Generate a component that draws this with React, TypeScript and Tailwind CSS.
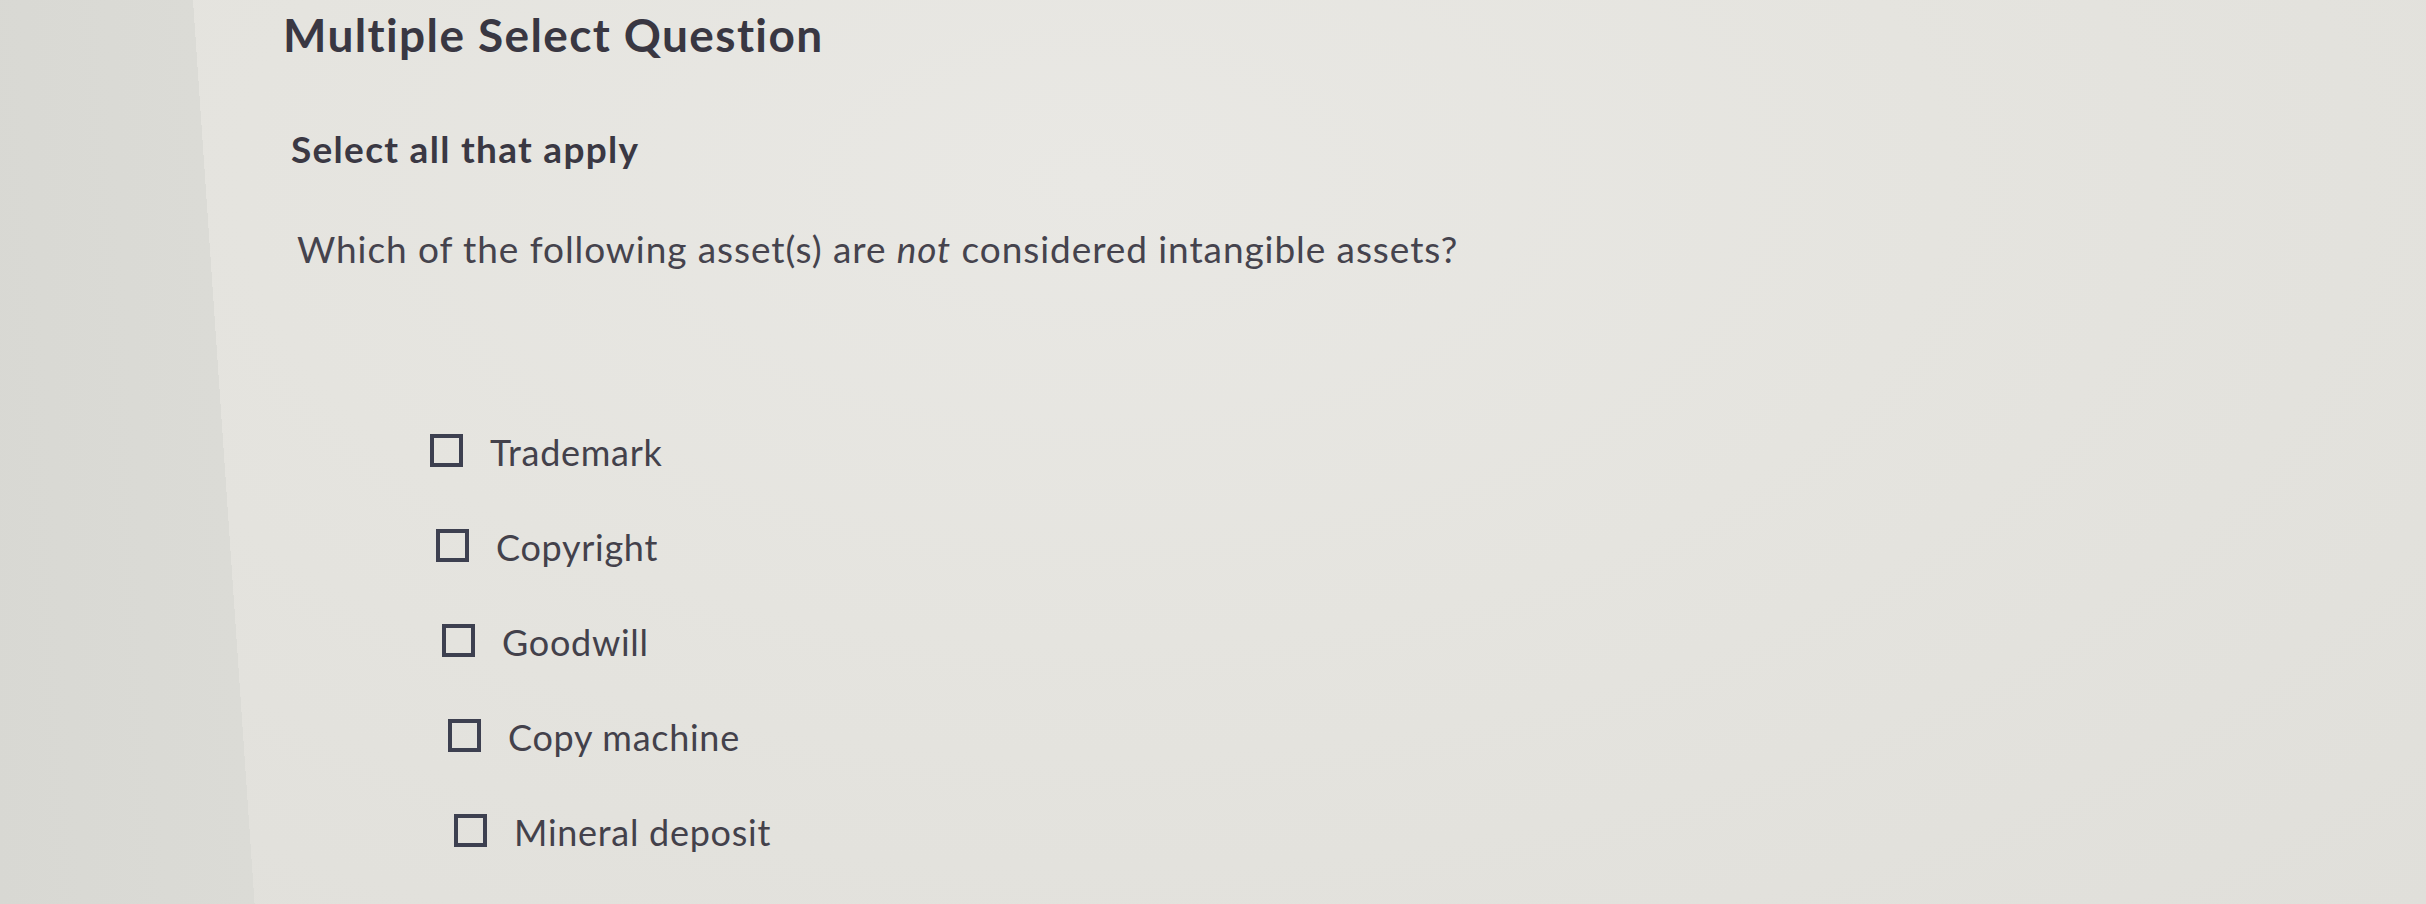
import React from "react";

const options = [
  { label: "Trademark", ml: "ml-[430px]" },
  { label: "Copyright", ml: "ml-[436px]" },
  { label: "Goodwill", ml: "ml-[442px]" },
  { label: "Copy machine", ml: "ml-[448px]" },
  { label: "Mineral deposit", ml: "ml-[454px]" },
];

export default function App() {
  return (
    <div className="relative w-[2426px] h-[904px] overflow-hidden bg-[#e4e3de] font-['Lato','Liberation_Sans',sans-serif] text-[#3e3c47]">
      <div className="absolute inset-0 bg-[radial-gradient(ellipse_at_45%_20%,#e9e8e4_0%,#e5e4df_45%,#e0dfda_100%)]" />
      <div className="absolute inset-0 bg-[linear-gradient(86.1deg,#d8d8d3_0px,#dbdbd6_254px,transparent_254px)]" />
      <div className="relative flex flex-col">
        <h1 className="mt-[7px] ml-[283px] text-[46px] leading-[56px] font-bold tracking-[0.03em] text-[#393742]">
          Multiple Select Question
        </h1>
        <div className="mt-[64px] ml-[291px] text-[37px] leading-[44px] font-bold tracking-[0.035em] text-[#3a3843]">
          Select all that apply
        </div>
        <div className="mt-[56px] ml-[297px] text-[37px] leading-[44px] tracking-[0.025em] text-[#45434d]">
          Which of the following asset(s) are <em className="italic">not</em> considered intangible assets?
        </div>
        <div className="mt-[157px] flex flex-col gap-[51px]">
          {options.map((o) => (
            <label key={o.label} className={`${o.ml} flex items-center gap-[27px] h-[44px]`}>
              <span className="block w-[33px] h-[33px] border-[4px] border-[#3d4050] bg-transparent" />
              <span className="text-[36px] leading-[44px] tracking-[0.02em] text-[#43414b] translate-y-[2px]">{o.label}</span>
            </label>
          ))}
        </div>
      </div>
    </div>
  );
}
